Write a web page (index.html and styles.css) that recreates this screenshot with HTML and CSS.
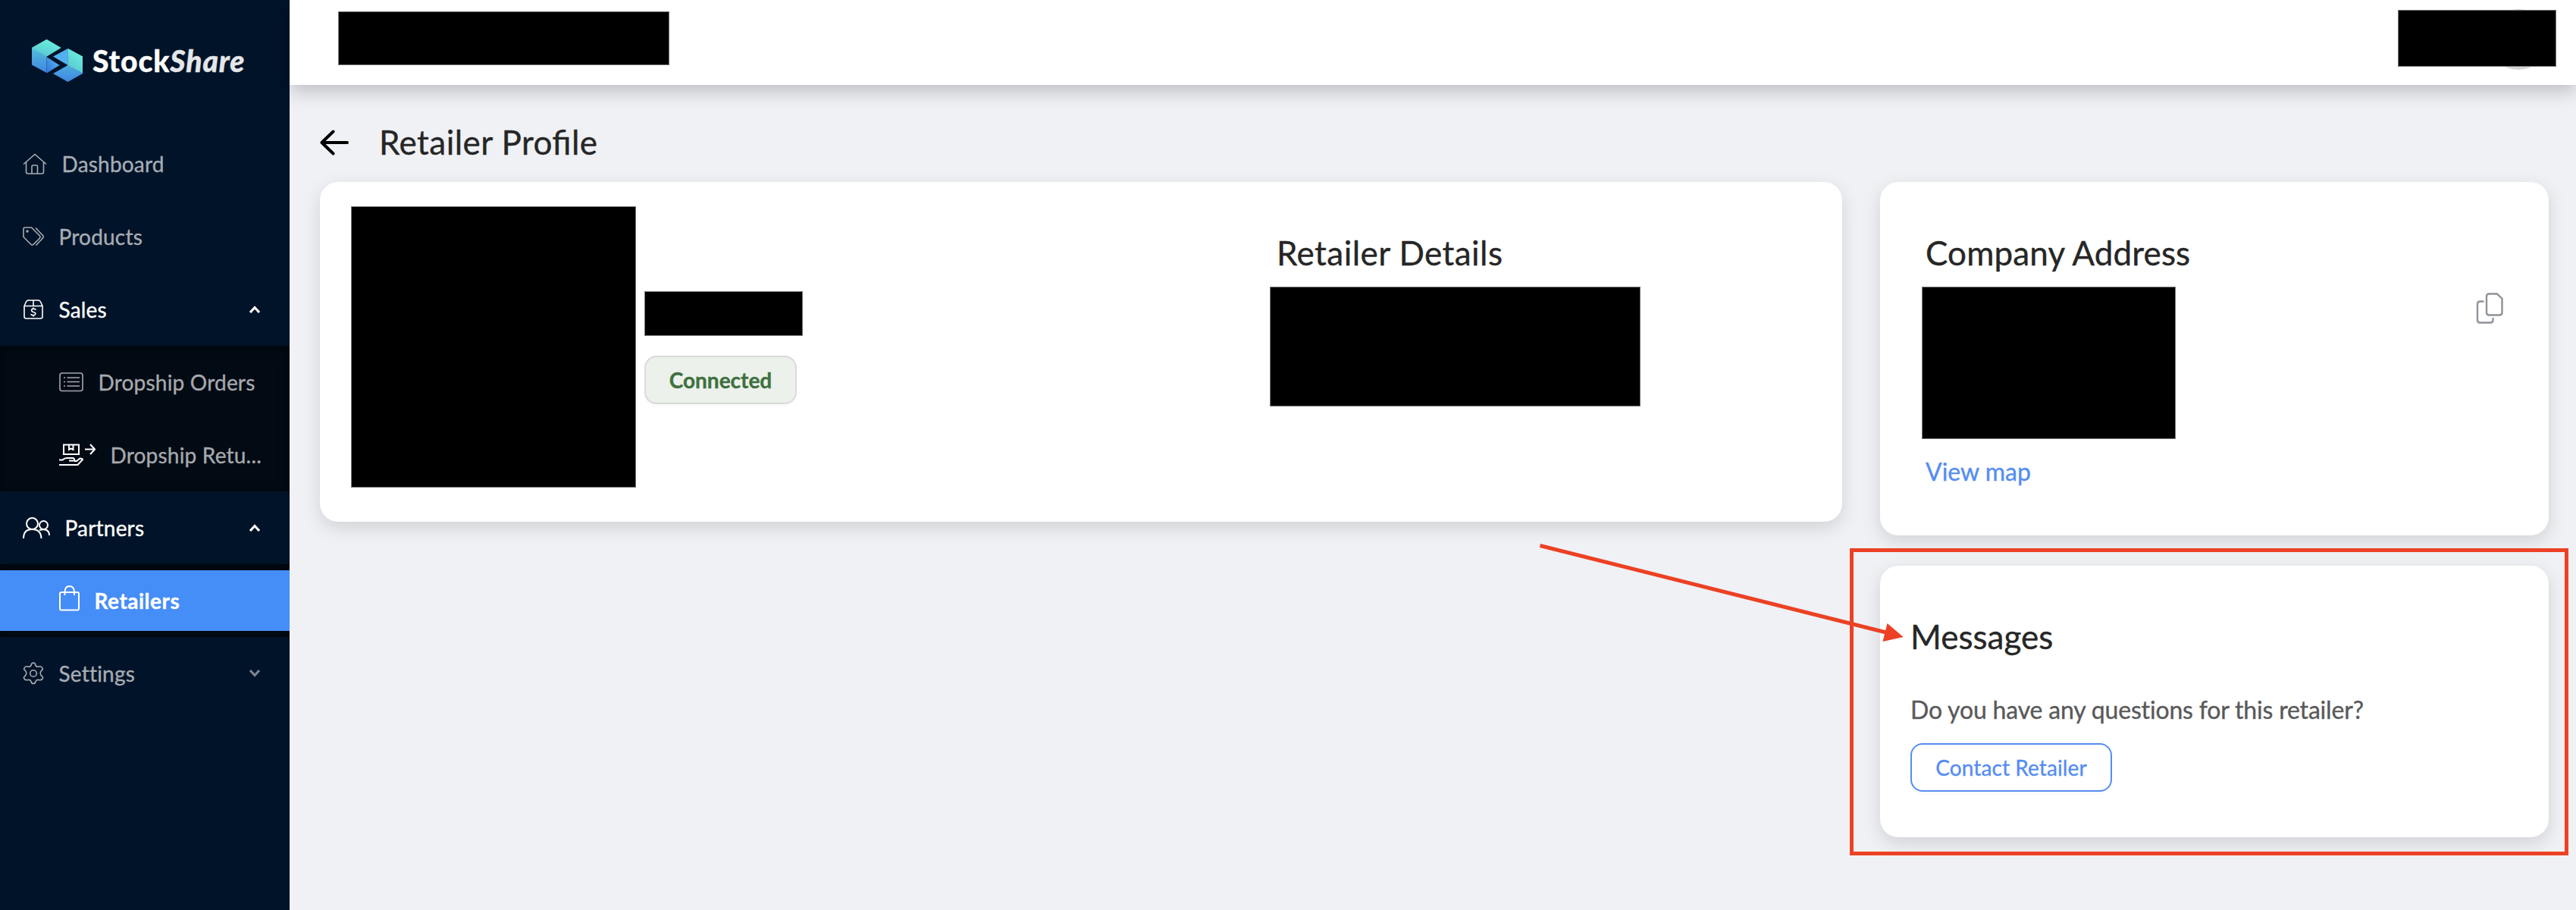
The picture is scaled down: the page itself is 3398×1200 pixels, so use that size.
FILE: index.html
```html
<!DOCTYPE html>
<html lang="en">
<head>
  <meta charset="UTF-8" />
  <meta name="viewport" content="width=device-width, initial-scale=1.0"/>
  <title>Retailer Profile - StockShare</title>
  <link rel="stylesheet" href="styles.css">
</head>
<body>

<aside class="sidebar">
  <div class="logo">
    <svg class="logo-mark" width="68" height="56" viewBox="0 0 68 56">
      <defs>
        <linearGradient id="faceTop" x1="0.8" y1="0" x2="0.3" y2="1">
          <stop offset="0" stop-color="#6df3e0"/>
          <stop offset="1" stop-color="#58c6cf"/>
        </linearGradient>
        <linearGradient id="faceSide" x1="0.5" y1="0" x2="0.5" y2="1">
          <stop offset="0" stop-color="#5cd0d4"/>
          <stop offset="1" stop-color="#3f86e4"/>
        </linearGradient>
        <linearGradient id="faceInner" x1="1" y1="0.3" x2="0" y2="1">
          <stop offset="0" stop-color="#52b4f2"/>
          <stop offset="1" stop-color="#3574d8"/>
        </linearGradient>
      </defs>
      <path d="M0 11 19.500 0 38.500 11 19.500 22.500V44L0 33.500Z" fill="url(#faceSide)"/>
      <path d="M0 11 19.500 0 38.500 11 19.500 22.500Z" fill="url(#faceTop)"/>
      <path d="M19.500 23 36.500 34 19.500 44.500Z" fill="url(#faceInner)"/>
      <path d="M47.500 12 67 22.500V45L47.500 56 28 45 47.500 34Z" fill="url(#faceSide)"/>
      <path d="M47.500 12 67 22.500V44L47.500 34Z" fill="url(#faceTop)"/>
      <path d="M47.500 12V34L28 22.500Z" fill="#52b0f0"/>
    </svg>
    <div class="logo-text">Stock<em>Share</em></div>
  </div>

  <nav class="menu">
    <a class="item">
      <svg class="icon" width="32" height="28" viewBox="0 0 32 28"><path d="M1 14.500 16 1.500 31 14.500M4.500 12V24.500Q4.500 27 7 27H25Q27.500 27 27.500 24.500V12M12 27V17.500Q12 16 13.500 16H18Q19.500 16 19.500 17.500V27"/></svg>
      <span>Dashboard</span>
    </a>
    <a class="item">
      <svg class="icon" width="28" height="26" viewBox="0 0 28 26"><path d="M1 3Q1 1 3 1H11.500L22 11.500Q24 13.500 22 15.500L14.500 23Q12.500 25 10.500 23L1 13.500ZM17 1.500 26.500 11.500Q28 13.500 26 15.500L17.500 24.500"/><circle cx="6" cy="6" r="1"/></svg>
      <span>Products</span>
    </a>
    <a class="item open">
      <svg class="icon" width="28" height="26" viewBox="0 0 28 26"><path d="M2 8.500 4.500 3Q5.500 1 7.500 1H20.500Q22.500 1 23.500 3L26 8.500V22.500Q26 25 23.500 25H4.500Q2 25 2 22.500ZM2 8.500H26M14 1V8.500M17.500 13.500Q14 11 12 13 10.500 15.500 14 16.500 18 17.500 16.500 19.500 14.500 22 10.500 19.500M14 10.500V12M14 21V22.500"/></svg>
      <span>Sales</span>
      <svg class="caret" width="16" height="12" viewBox="0 0 16 12"><path d="M2 10 8 3.500 14 10"/></svg>
    </a>
    <div class="submenu">
      <a class="item">
        <svg class="icon" width="32" height="26" viewBox="0 0 32 26"><rect x="1" y="1" width="30" height="23.500" rx="3"/><path d="M10.500 7H27M10.500 12.500H27M10.500 18H27M6 7H8M6 12.500H8M6 18H8"/></svg>
        <span>Dropship Orders</span>
      </a>
      <a class="item">
        <svg class="icon bright" width="48" height="30" viewBox="0 0 48 30"><path d="M6 1.500H26V14H6ZM13 1.500V8L15.500 6.500 18.500 8V1.500M34 7.500H47M41 1 47 7.500 41 14M0 21.500H4.500Q7 19 10.500 19H18Q21 19.500 20 22.500H13M20 23H23L27.500 19.500Q30.500 19.500 31 21L24.500 28H0"/></svg>
        <span>Dropship Retu...</span>
      </a>
    </div>
    <a class="item open">
      <svg class="icon thick" width="36" height="28" viewBox="0 0 36 28"><circle cx="12.500" cy="8.500" r="7.500"/><circle cx="27.500" cy="10.500" r="5.500"/><path d="M1 28Q1 16 12.500 16 24 16 24.500 28M22 17Q35 14 35 24"/></svg>
      <span>Partners</span>
      <svg class="caret" width="16" height="12" viewBox="0 0 16 12"><path d="M2 10 8 3.500 14 10"/></svg>
    </a>
    <div class="submenu">
      <a class="item active">
        <svg class="icon thick bag" width="27" height="34" viewBox="0 0 27 34"><rect x="1" y="9" width="25" height="23.500" rx="2"/><path d="M7.500 13V8Q8 1 13.500 1 19.500 1 20 8V13"/></svg>
        <span>Retailers</span>
      </a>
    </div>
    <a class="item">
      <svg class="icon" width="28" height="30" viewBox="0 0 28 30"><path d="M11 4.500Q11.500 1 14 1 16.500 1 17 4.500 18.500 7 21 6 24.500 5 26 8 27 10 24.500 11.500 22 14.500 24.500 18 27.500 20 26 22 24.500 24.500 21 23.500 18 23 17 25.500 16.500 28.500 14 28.500 11.500 28.500 11 25.500 10 23 7 23.500 3.500 24.500 2 22 .5 20 3.500 18 6 14.500 3.500 11.500 1 10 2 8 3.500 5 7 6 9.500 7 11 4.500Z"/><circle cx="14" cy="15" r="4.300"/></svg>
      <span>Settings</span>
      <svg class="caret dim" width="16" height="12" viewBox="0 0 16 12"><path d="M2 2 8 8.500 14 2"/></svg>
    </a>
  </nav>
</aside>

<div class="page">
  <header class="topbar">
    <div class="redacted company"></div>
    <div class="user">
      <div class="avatar"></div>
      <div class="redacted account"></div>
    </div>
  </header>

  <main>
    <div class="title">
      <svg width="38" height="34" viewBox="0 0 38 34"><path d="M36 17H2.500M17.500 2.500 2.500 17 17.500 31.500"/></svg>
      <h1>Retailer Profile</h1>
    </div>

    <div class="content">
      <section class="card profile">
        <div class="redacted photo"></div>
        <div class="identity">
          <div class="redacted name"></div>
          <span class="badge">Connected</span>
        </div>
        <div class="details">
          <h2>Retailer Details</h2>
          <div class="redacted info"></div>
        </div>
      </section>

      <div class="side">
        <section class="card address">
          <h2>Company Address</h2>
          <div class="address-row">
            <div class="redacted street"></div>
            <svg class="copy" width="36" height="42" viewBox="0 0 36 42"><path d="M14 5Q14 1.500 17.500 1.500H28L34.500 8V26Q34.500 29.500 31 29.500H17.500Q14 29.500 14 26ZM10.500 11.500H5.500Q2 11.500 2 15V36Q2 39.500 5.500 39.500H19Q22.500 39.500 22.500 36V33"/></svg>
          </div>
          <a class="map-link">View map</a>
        </section>

        <section class="card messages">
          <h2>Messages</h2>
          <p>Do you have any questions for this retailer?</p>
          <button type="button">Contact Retailer</button>
          <div class="highlight"></div>
          <svg class="pointer" width="482" height="136" viewBox="0 0 482 136"><path d="M1.500 4.500 458 119" stroke="#ec4124" stroke-width="5"/><path d="M480.700 125 453.500 131 459.500 107Z" fill="#ec4124"/></svg>
        </section>
      </div>
    </div>
  </main>
</div>

</body>
</html>
```

FILE: styles.css
```css
* {
  box-sizing: border-box;
}
body {
  font-family: Lato, sans-serif;
  margin: 0;
  display: flex;
  height: 1200px;
  overflow: hidden;
  background: #f0f1f5;
  color: #262626;
  font-size: 28px;
  -webkit-text-stroke: 0.35px;
}
svg {
  display: block;
  flex: none;
  fill: none;
}

/* Sidebar */
.sidebar {
  width: 382px;
  flex: none;
  background: #011328;
}
.logo {
  display: flex;
  height: 168px;
  padding: 52px 0 0 42px;
  gap: 12px;
}
.logo-text {
  color: #fff;
  font-size: 39px;
  font-weight: 900;
  line-height: 56px;
  letter-spacing: 0.9px;
}
.logo-text em {
  color: #e4e6e9;
}
.item {
  display: flex;
  align-items: center;
  height: 96px;
  padding: 0 38px 0 30px;
  color: #a6adb4;
  letter-spacing: 0.2px;
  white-space: nowrap;
}
.item span {
  margin-left: 19.5px;
}
.icon {
  stroke: currentColor;
  stroke-width: 1.6;
}
.icon.thick {
  stroke-width: 2;
}
.icon.bright {
  stroke: #fff;
  stroke-width: 2;
}
.icon.bag {
  margin-top: -6px;
}
.item.open {
  color: #fff;
}
.caret {
  margin-left: auto;
  stroke: #fff;
  stroke-width: 3.2;
}
.caret.dim {
  stroke: #7c8590;
}
.submenu {
  background: #020a14;
  box-shadow: inset 0 4px 16px rgba(0, 0, 0, 0.45);
}
.submenu .item {
  padding-left: 78px;
  color: #a6a9ad;
}
.submenu .item.active {
  height: 80px;
  color: #fff;
  background: #458df7;
  font-weight: 700;
  letter-spacing: 0.5px;
}
.submenu:has(.active) {
  padding: 8px 0;
}

/* Top bar */
.page {
  flex: 1;
}
.topbar {
  display: flex;
  justify-content: space-between;
  height: 112px;
  padding: 13px 26px 0 64px;
  background: #fff;
  box-shadow: 0 8px 24px rgba(0, 0, 0, 0.22);
}
.redacted {
  background: #000;
  border: 1px solid #777;
}
.company {
  width: 437px;
  height: 71px;
  margin-top: 2px;
}
.user {
  position: relative;
  width: 209px;
  height: 75px;
}
.avatar {
  position: absolute;
  right: 10px;
  top: -1px;
  width: 80px;
  height: 80px;
  border-radius: 50%;
  background: #d4d4d4;
}
.account {
  position: relative;
  height: 75px;
}

/* Content */
main {
  padding: 0 36px 0 40px;
}
.title {
  display: flex;
  align-items: center;
  height: 128px;
  gap: 40px;
}
.title svg {
  margin-top: 24px;
  stroke: #000;
  stroke-width: 4;
  stroke-linecap: round;
  stroke-linejoin: round;
}
h1, h2 {
  margin: 0;
  font-size: 44px;
  font-weight: 400;
  line-height: 58px;
}
.title h1 {
  margin-top: 22px;
  letter-spacing: 0.45px;
  font-feature-settings: "liga" 1;
}
.content {
  display: flex;
  align-items: flex-start;
  gap: 50px;
}
.card {
  background: #fff;
  border-radius: 24px;
  box-shadow: 0 8px 24px rgba(0, 0, 0, 0.13);
}
.profile {
  display: flex;
  width: 2008px;
  height: 448px;
  padding: 32px 0 0 41px;
}
.photo {
  width: 376px;
  height: 371px;
}
.identity {
  width: 836px;
  padding: 112px 0 0 11px;
}
.name {
  width: 209px;
  height: 59px;
  margin-bottom: 26px;
}
.badge {
  display: block;
  width: 201px;
  height: 64px;
  border: 2px solid #d9d9d9;
  border-radius: 16px;
  background: #ecf1eb;
  box-shadow: 0 4px 0 rgba(0, 0, 0, 0.015);
  color: #3f703f;
  font-weight: 700;
  line-height: 60px;
  text-align: center;
}
.details h2 {
  padding: 32px 0 0 9px;
  letter-spacing: 0.45px;
}
.info {
  width: 489px;
  height: 158px;
  margin-top: 16px;
}
.side {
  width: 882px;
}
.address {
  height: 466px;
  margin-bottom: 40px;
  padding: 64px 60px 0 55px;
}
.address h2 {
  padding-left: 5px;
  letter-spacing: 0.15px;
}
.address-row {
  display: flex;
  justify-content: space-between;
  margin-top: 16px;
}
.street {
  width: 335px;
  height: 201px;
}
.copy {
  margin-top: 8px;
  stroke: #8f9399;
  stroke-width: 2.4;
}
.map-link {
  display: block;
  margin: 21px 0 0 5px;
  color: #558df2;
  font-size: 32px;
  line-height: 44px;
}
.messages {
  position: relative;
  height: 358px;
  padding: 64px 40px 0;
}
.messages p {
  margin: 46px 0 22px;
  color: #595959;
  font-size: 32px;
  line-height: 44px;
  letter-spacing: -0.18px;
}
.messages button {
  display: block;
  width: 266px;
  height: 64px;
  padding: 0;
  border: 2px solid #558df2;
  border-radius: 16px;
  background: #fff;
  box-shadow: 0 4px 0 rgba(0, 0, 0, 0.015);
  color: #558df2;
  font-family: inherit;
  font-size: 28px;
  letter-spacing: 0.1px;
}
/* callout drawn over the messages card */
.highlight {
  position: absolute;
  left: -40px;
  top: -23px;
  width: 948px;
  height: 405px;
  border: 5px solid #ec4124;
}
.pointer {
  position: absolute;
  left: -450px;
  top: -31px;
}
```
